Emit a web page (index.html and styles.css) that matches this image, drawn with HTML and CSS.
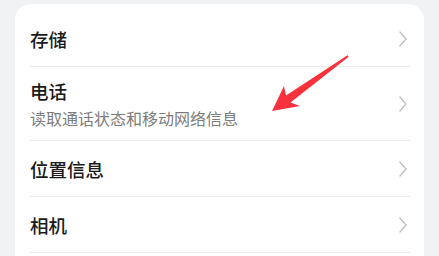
FILE: index.html
```html
<!DOCTYPE html>
<html lang="zh-CN">
<head>
<meta charset="utf-8">
<link rel="stylesheet" href="styles.css">
</head>
<body>
<div class="card">
  <div class="row">
    <div class="text"><div class="title">存储</div></div>
    <svg class="chev" viewBox="0 0 8 16"><path d="M1 1 L7 8 L1 15" /></svg>
  </div>
  <div class="row tall">
    <div class="text">
      <div class="title">电话</div>
      <div class="sub">读取通话状态和移动网络信息</div>
    </div>
    <svg class="chev" viewBox="0 0 8 16"><path d="M1 1 L7 8 L1 15" /></svg>
  </div>
  <div class="row">
    <div class="text"><div class="title">位置信息</div></div>
    <svg class="chev" viewBox="0 0 8 16"><path d="M1 1 L7 8 L1 15" /></svg>
  </div>
  <div class="row">
    <div class="text"><div class="title">相机</div></div>
    <svg class="chev" viewBox="0 0 8 16"><path d="M1 1 L7 8 L1 15" /></svg>
  </div>
</div>
<svg class="arrow" width="439" height="256" viewBox="0 0 439 256">
  <polygon points="272,111 284,86 286,95.5 347.5,55.2 348.7,56.8 290.5,102.5 300,106" />
</svg>
</body>
</html>
```
FILE: styles.css
```css
html, body {
  margin: 0;
  padding: 0;
  background: #f1f2f4;
  overflow: hidden;
  height: 256px;
}
body {
  padding: 4px 15px 0 15px;
  box-sizing: border-box;
  font-family: "Noto Sans CJK SC", "Noto Sans", sans-serif;
  position: relative;
}
.card {
  background: #ffffff;
  border-radius: 16px 16px 0 0;
  padding: 7px 14px 20px 15px;
}
.row {
  display: flex;
  align-items: center;
  justify-content: space-between;
  min-height: 55px;
  border-bottom: 1px solid #ececec;
  padding-right: 3px;
}
.row.tall {
  min-height: 73px;
}
.title {
  font-size: 18.5px;
  line-height: 24px;
  color: #1b1b1b;
  font-weight: 500;
}
.sub {
  font-size: 16px;
  line-height: 22px;
  color: #7d7d7d;
  margin-top: 4px;
}
.chev {
  width: 8px;
  height: 16px;
  flex: none;
}
.chev path {
  fill: none;
  stroke: #c2c2c2;
  stroke-width: 1.5;
  stroke-linecap: round;
  stroke-linejoin: round;
}
.arrow {
  position: absolute;
  left: 0;
  top: 0;
}
.arrow polygon {
  fill: #f7323c;
}
```
